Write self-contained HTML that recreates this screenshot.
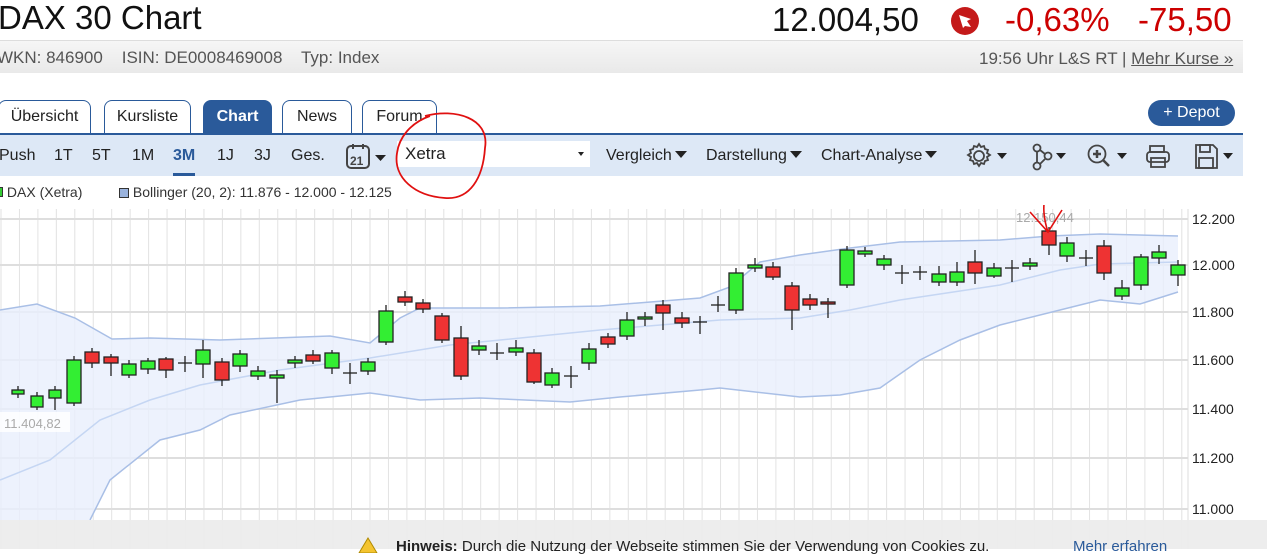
<!DOCTYPE html>
<html><head><meta charset="utf-8"><style>
*{margin:0;padding:0;box-sizing:border-box}
body{width:1267px;height:549px;overflow:hidden;background:#fff;font-family:"Liberation Sans",sans-serif;position:relative;color:#222}
.abs{position:absolute;white-space:nowrap}
.tab{position:absolute;top:100px;height:33px;border:1px solid #2a5a9a;border-bottom:none;border-radius:8px 8px 0 0;background:#fff;font-size:16px;text-align:center;line-height:32px;color:#222}
.nav{position:absolute;top:133px;left:0;width:1243px;height:43px;background:#dde8f6;border-top:2px solid #2a5a9a}
.n{position:absolute;top:12px;font-size:16px;color:#222}
.tri{display:inline-block;width:0;height:0;border-left:6px solid transparent;border-right:6px solid transparent;border-top:7px solid #222;margin-left:3px;vertical-align:2px}
</style></head><body>
<div class="abs" style="left:-2px;top:-1px;font-size:33px;color:#111">DAX 30 Chart</div>
<div class="abs" style="left:772px;top:1px;font-size:33px;color:#111">12.004,50</div>
<svg class="abs" style="left:950px;top:6px" width="30" height="30"><circle cx="15" cy="15" r="14" fill="#c41a1a"/><path d="M9 9 L21 13 L17 15 L21 21 L15 20 L13 22 Z" fill="#fff"/></svg>
<div class="abs" style="left:1005px;top:1px;font-size:33px;color:#c00">-0,63%</div>
<div class="abs" style="left:1138px;top:1px;font-size:33px;color:#c00">-75,50</div>
<div class="abs" style="left:0;top:40px;width:1243px;height:33px;background:linear-gradient(#f6f6f6,#e9e9e9);border-top:1px solid #ddd"></div>
<div class="abs" style="left:-3px;top:48px;font-size:17px;color:#555">WKN: 846900&nbsp;&nbsp;&nbsp; ISIN: DE0008469008&nbsp;&nbsp;&nbsp; Typ: Index</div>
<div class="abs" style="left:979px;top:49px;font-size:17px;color:#555">19:56 Uhr L&amp;S RT | <span style="text-decoration:underline">Mehr Kurse »</span></div>

<div class="tab" style="left:-2px;width:93px">Übersicht</div>
<div class="tab" style="left:104px;width:87px">Kursliste</div>
<div class="tab" style="left:203px;width:69px;background:#2a5a9a;color:#fff;font-weight:bold">Chart</div>
<div class="tab" style="left:282px;width:70px">News</div>
<div class="tab" style="left:362px;width:75px">Forum</div>
<div class="abs" style="left:1148px;top:100px;width:87px;height:26px;border-radius:13px;background:#2a5a9a;color:#fff;font-size:16px;text-align:center;line-height:26px">+ Depot</div>

<div class="nav">
<span class="n" style="left:-1px">Push</span><span class="n" style="left:54px">1T</span><span class="n" style="left:92px">5T</span><span class="n" style="left:132px">1M</span>
<span class="n" style="left:173px;color:#2a5a9a;font-weight:bold">3M</span><div class="abs" style="left:173px;top:38px;width:22px;height:3px;background:#2a5a9a"></div>
<span class="n" style="left:217px">1J</span><span class="n" style="left:254px">3J</span><span class="n" style="left:291px">Ges.</span>
<svg class="abs" style="left:345px;top:7px" width="46" height="30"><rect x="2" y="4" width="22" height="22" rx="4" fill="none" stroke="#444" stroke-width="2"/><line x1="8" y1="2" x2="8" y2="7" stroke="#444" stroke-width="2"/><line x1="18" y1="2" x2="18" y2="7" stroke="#444" stroke-width="2"/><text x="5" y="23" font-size="12" font-weight="bold" fill="#444" font-family="Liberation Sans">21</text><path d="M30 13h11l-5.5 6z" fill="#222"/></svg>
<div class="abs" style="left:397px;top:6px;width:193px;height:26px;background:#fff;font-size:17px;padding:3px 8px">Xetra<span style="position:absolute;right:6px;top:11px;border-left:3px solid transparent;border-right:3px solid transparent;border-top:4px solid #222"></span></div>
<span class="n" style="left:606px">Vergleich<span class="tri"></span></span>
<span class="n" style="left:706px">Darstellung<span class="tri"></span></span>
<span class="n" style="left:821px">Chart-Analyse<span class="tri"></span></span>
<svg class="abs" style="left:965px;top:6px" width="280" height="32">
<g fill="none" stroke="#444" stroke-width="1.8"><circle cx="14" cy="15" r="5"/><path d="M14 3l2 3 3-1 1 3 3 1-1 3 3 2-3 2 1 3-3 1-1 3-3-1-2 3-2-3-3 1-1-3-3-1 1-3-3-2 3-2-1-3 3-1 1-3 3 1z"/>
<circle cx="72" cy="7" r="3.5"/><circle cx="83" cy="15" r="3.5"/><circle cx="72" cy="25" r="3.5"/><path d="M72 10v12M75 9l5 4M75 23l5-5"/>
<circle cx="132" cy="13" r="8.5"/><path d="M128 13h8M132 9v8M138 19l6 6" stroke-width="2.5"/>
<rect x="185" y="5" width="14" height="6"/><rect x="182" y="11" width="22" height="10" rx="3"/><rect x="186" y="17" width="14" height="9"/>
<path d="M231 4h17l4 4v19h-21z"/><rect x="235" y="4" width="10" height="7"/><rect x="234" y="17" width="14" height="10"/></g>
<g fill="#222"><path d="M32 12h10l-5 6zM91 12h10l-5 6zM152 12h10l-5 6zM258 12h10l-5 6z"/></g></svg>
</div>
<svg class="abs" style="left:385px;top:108px" width="110" height="95"><path d="M40 8 C70 0 105 10 100 40 C98 70 85 92 60 90 C30 88 8 70 12 45 C14 30 25 15 45 8" fill="none" stroke="#e01010" stroke-width="1.8"/></svg>

<div class="abs" style="left:0;top:184px;font-size:14px;color:#333"><span style="display:inline-block;width:3px;height:10px;background:#3c3;border:1px solid #333;border-left:none"></span> DAX (Xetra)</div>
<div class="abs" style="left:119px;top:184px;font-size:14px;color:#333"><span style="display:inline-block;width:10px;height:10px;background:#9ab3dd;border:1px solid #333;vertical-align:-1px"></span> Bollinger (20, 2): 11.876 - 12.000 - 12.125</div>

<svg class="abs" style="left:0;top:205px" width="1267" height="344">
<defs><pattern id="g" x="0.5" y="0" width="18.45" height="400" patternUnits="userSpaceOnUse"><line x1="0.5" y1="0" x2="0.5" y2="400" stroke="#e2e2e2" stroke-width="1"/></pattern></defs>
<rect x="0" y="4" width="1188" height="340" fill="url(#g)"/>
<g stroke="#dedede" stroke-width="2"><line x1="0" y1="14" x2="1188" y2="14"/><line x1="0" y1="60" x2="1188" y2="60"/><line x1="0" y1="107" x2="1188" y2="107"/><line x1="0" y1="155" x2="1188" y2="155"/><line x1="0" y1="204" x2="1188" y2="204"/><line x1="0" y1="253" x2="1188" y2="253"/><line x1="0" y1="304" x2="1188" y2="304"/></g>
<line x1="1188" y1="4" x2="1188" y2="344" stroke="#ddd"/>
<g transform="translate(0,-205)">
<path d="M0 310 L37 304 L75 318 L112 339 L150 338 L220 340 L330 336 L370 343 L400 318 L420 308 L500 308 L600 306 L700 298 L730 287 L760 262 L800 255 L850 248 L900 242 L1000 240 L1050 236 L1100 234 L1178 236 L1178 292 L1140 304 L1100 300 L1060 310 L1000 325 L960 340 L920 360 L880 388 L840 395 L800 397 L720 388 L700 390 L620 397 L570 402 L480 398 L420 400 L370 393 L300 400 L230 415 L200 430 L160 440 L110 480 L90 520 L0 520 Z" fill="#e8effc" fill-opacity="0.8" stroke="none"/>
<path d="M0 310 L37 304 L75 318 L112 339 L150 338 L220 340 L330 336 L370 343 L400 318 L420 308 L500 308 L600 306 L700 298 L730 287 L760 262 L800 255 L850 248 L900 242 L1000 240 L1050 236 L1100 234 L1178 236" fill="none" stroke="#a9bfe6" stroke-width="1.5"/>
<path d="M90 520 L110 480 L160 440 L200 430 L230 415 L300 400 L370 393 L420 400 L480 398 L570 402 L620 397 L700 390 L720 388 L800 397 L840 395 L880 388 L920 360 L960 340 L1000 325 L1060 310 L1100 300 L1140 304 L1178 292" fill="none" stroke="#a9bfe6" stroke-width="1.5"/>
<path d="M0 480 L50 460 L100 420 L150 400 L200 385 L280 370 L370 358 L450 345 L600 330 L720 320 L800 318 L850 310 L900 300 L1000 285 L1060 270 L1100 264 L1178 262" fill="none" stroke="#c5d6f3" stroke-width="1.5"/>
<g stroke="#222" stroke-width="1.3">
<line x1="18" y1="386" x2="18" y2="398"/><rect x="12" y="390" width="12" height="4" fill="#3e3"/>
<line x1="37" y1="392" x2="37" y2="410"/><rect x="31" y="396" width="12" height="11" fill="#3e3"/>
<line x1="55" y1="386" x2="55" y2="410"/><rect x="49" y="390" width="12" height="8" fill="#3e3"/>
<line x1="74" y1="356" x2="74" y2="406"/><rect x="67" y="360" width="14" height="43" fill="#3e3"/>
<line x1="92" y1="348" x2="92" y2="368"/><rect x="85" y="352" width="14" height="11" fill="#e33"/>
<line x1="111" y1="354" x2="111" y2="376"/><rect x="104" y="357" width="14" height="6" fill="#e33"/>
<line x1="129" y1="360" x2="129" y2="378"/><rect x="122" y="364" width="14" height="11" fill="#3e3"/>
<line x1="148" y1="358" x2="148" y2="374"/><rect x="141" y="361" width="14" height="8" fill="#3e3"/>
<line x1="166" y1="357" x2="166" y2="378"/><rect x="159" y="359" width="14" height="11" fill="#e33"/>
<line x1="185" y1="356" x2="185" y2="372"/><line x1="178" y1="363" x2="192" y2="363"/>
<line x1="203" y1="340" x2="203" y2="378"/><rect x="196" y="350" width="14" height="14" fill="#3e3"/>
<line x1="222" y1="358" x2="222" y2="386"/><rect x="215" y="362" width="14" height="18" fill="#e33"/>
<line x1="240" y1="350" x2="240" y2="372"/><rect x="233" y="354" width="14" height="12" fill="#3e3"/>
<line x1="258" y1="366" x2="258" y2="380"/><rect x="251" y="371" width="14" height="5" fill="#3e3"/>
<line x1="277" y1="370" x2="277" y2="403"/><rect x="270" y="375" width="14" height="3" fill="#3e3"/>
<line x1="295" y1="356" x2="295" y2="368"/><rect x="288" y="360" width="14" height="3" fill="#3e3"/>
<line x1="313" y1="350" x2="313" y2="364"/><rect x="306" y="355" width="14" height="6" fill="#e33"/>
<line x1="332" y1="350" x2="332" y2="374"/><rect x="325" y="353" width="14" height="15" fill="#3e3"/>
<line x1="350" y1="363" x2="350" y2="384"/><line x1="343" y1="373" x2="357" y2="373"/>
<line x1="368" y1="358" x2="368" y2="375"/><rect x="361" y="362" width="14" height="9" fill="#3e3"/>
<line x1="386" y1="305" x2="386" y2="345"/><rect x="379" y="311" width="14" height="31" fill="#3e3"/>
<line x1="405" y1="291" x2="405" y2="306"/><rect x="398" y="297" width="14" height="5" fill="#e33"/>
<line x1="423" y1="299" x2="423" y2="313"/><rect x="416" y="303" width="14" height="6" fill="#e33"/>
<line x1="442" y1="313" x2="442" y2="343"/><rect x="435" y="316" width="14" height="24" fill="#e33"/>
<line x1="461" y1="326" x2="461" y2="380"/><rect x="454" y="338" width="14" height="38" fill="#e33"/>
<line x1="479" y1="340" x2="479" y2="355"/><rect x="472" y="346" width="14" height="4" fill="#3e3"/>
<line x1="497" y1="343" x2="497" y2="360"/><line x1="490" y1="353" x2="504" y2="353"/>
<line x1="516" y1="340" x2="516" y2="356"/><rect x="509" y="348" width="14" height="4" fill="#3e3"/>
<line x1="534" y1="349" x2="534" y2="384"/><rect x="527" y="353" width="14" height="29" fill="#e33"/>
<line x1="552" y1="368" x2="552" y2="388"/><rect x="545" y="373" width="14" height="12" fill="#3e3"/>
<line x1="571" y1="366" x2="571" y2="388"/><line x1="564" y1="376" x2="578" y2="376"/>
<line x1="589" y1="343" x2="589" y2="370"/><rect x="582" y="349" width="14" height="14" fill="#3e3"/>
<line x1="608" y1="333" x2="608" y2="348"/><rect x="601" y="337" width="14" height="7" fill="#e33"/>
<line x1="627" y1="312" x2="627" y2="340"/><rect x="620" y="320" width="14" height="16" fill="#3e3"/>
<line x1="645" y1="312" x2="645" y2="326"/><rect x="638" y="317" width="14" height="2" fill="#3e3"/>
<line x1="663" y1="300" x2="663" y2="330"/><rect x="656" y="305" width="14" height="8" fill="#e33"/>
<line x1="682" y1="312" x2="682" y2="328"/><rect x="675" y="318" width="14" height="5" fill="#e33"/>
<line x1="700" y1="316" x2="700" y2="334"/><line x1="693" y1="322" x2="707" y2="322"/>
<line x1="718" y1="296" x2="718" y2="312"/><line x1="711" y1="305" x2="725" y2="305"/>
<line x1="736" y1="268" x2="736" y2="314"/><rect x="729" y="273" width="14" height="37" fill="#3e3"/>
<line x1="755" y1="258" x2="755" y2="272"/><rect x="748" y="265" width="14" height="3" fill="#3e3"/>
<line x1="773" y1="262" x2="773" y2="280"/><rect x="766" y="267" width="14" height="10" fill="#e33"/>
<line x1="792" y1="282" x2="792" y2="330"/><rect x="785" y="286" width="14" height="24" fill="#e33"/>
<line x1="810" y1="294" x2="810" y2="310"/><rect x="803" y="299" width="14" height="6" fill="#e33"/>
<line x1="828" y1="298" x2="828" y2="318"/><rect x="821" y="302" width="14" height="2" fill="#e33"/>
<line x1="847" y1="246" x2="847" y2="288"/><rect x="840" y="250" width="14" height="35" fill="#3e3"/>
<line x1="865" y1="247" x2="865" y2="257"/><rect x="858" y="251" width="14" height="3" fill="#3e3"/>
<line x1="884" y1="255" x2="884" y2="270"/><rect x="877" y="259" width="14" height="6" fill="#3e3"/>
<line x1="902" y1="265" x2="902" y2="284"/><line x1="895" y1="273" x2="909" y2="273"/>
<line x1="920" y1="266" x2="920" y2="280"/><line x1="913" y1="272" x2="927" y2="272"/>
<line x1="939" y1="266" x2="939" y2="286"/><rect x="932" y="274" width="14" height="8" fill="#3e3"/>
<line x1="957" y1="262" x2="957" y2="286"/><rect x="950" y="272" width="14" height="10" fill="#3e3"/>
<line x1="975" y1="250" x2="975" y2="284"/><rect x="968" y="262" width="14" height="11" fill="#e33"/>
<line x1="994" y1="263" x2="994" y2="278"/><rect x="987" y="268" width="14" height="8" fill="#3e3"/>
<line x1="1012" y1="260" x2="1012" y2="282"/><line x1="1005" y1="268" x2="1019" y2="268"/>
<line x1="1030" y1="258" x2="1030" y2="270"/><rect x="1023" y="263" width="14" height="3" fill="#3e3"/>
<line x1="1049" y1="227" x2="1049" y2="255"/><rect x="1042" y="231" width="14" height="14" fill="#e33"/>
<line x1="1067" y1="237" x2="1067" y2="262"/><rect x="1060" y="243" width="14" height="13" fill="#3e3"/>
<line x1="1086" y1="250" x2="1086" y2="266"/><line x1="1079" y1="258" x2="1093" y2="258"/>
<line x1="1104" y1="240" x2="1104" y2="280"/><rect x="1097" y="246" width="14" height="27" fill="#e33"/>
<line x1="1122" y1="280" x2="1122" y2="300"/><rect x="1115" y="288" width="14" height="8" fill="#3e3"/>
<line x1="1141" y1="254" x2="1141" y2="290"/><rect x="1134" y="257" width="14" height="28" fill="#3e3"/>
<line x1="1159" y1="245" x2="1159" y2="264"/><rect x="1152" y="252" width="14" height="6" fill="#3e3"/>
<line x1="1178" y1="260" x2="1178" y2="286"/><rect x="1171" y="265" width="14" height="10" fill="#3e3"/>
</g>
<rect x="0" y="412" width="70" height="20" fill="#fff" fill-opacity="0.8"/>
<text x="4" y="428" font-size="13" fill="#aaa" font-family="Liberation Sans">11.404,82</text>
<text x="1016" y="222" font-size="13" fill="#aaa" font-family="Liberation Sans">12.150,44</text>
<g font-size="14" fill="#222" font-family="Liberation Sans"><text x="1192" y="224">12.200</text><text x="1192" y="270">12.000</text><text x="1192" y="317">11.800</text><text x="1192" y="365">11.600</text><text x="1192" y="414">11.400</text><text x="1192" y="463">11.200</text><text x="1192" y="514">11.000</text></g>
<path d="M1046 196 C1042 205 1044 220 1048 232 M1030 212 L1048 232 L1062 210" fill="none" stroke="#e01010" stroke-width="1.6"/>
</g>
</svg>

<div class="abs" style="left:0;top:520px;width:1267px;height:29px;background:#ececec;opacity:0.95"></div>
<svg class="abs" style="left:358px;top:537px" width="20" height="16"><path d="M10 1 L19 16 L1 16 Z" fill="#f4c430" stroke="#b08a00"/></svg>
<div class="abs" style="left:396px;top:538px;font-size:15px;color:#222"><b>Hinweis:</b> Durch die Nutzung der Webseite stimmen Sie der Verwendung von Cookies zu.</div>
<div class="abs" style="left:1073px;top:538px;font-size:15px;color:#2a5a9a">Mehr erfahren</div>
</body></html>
